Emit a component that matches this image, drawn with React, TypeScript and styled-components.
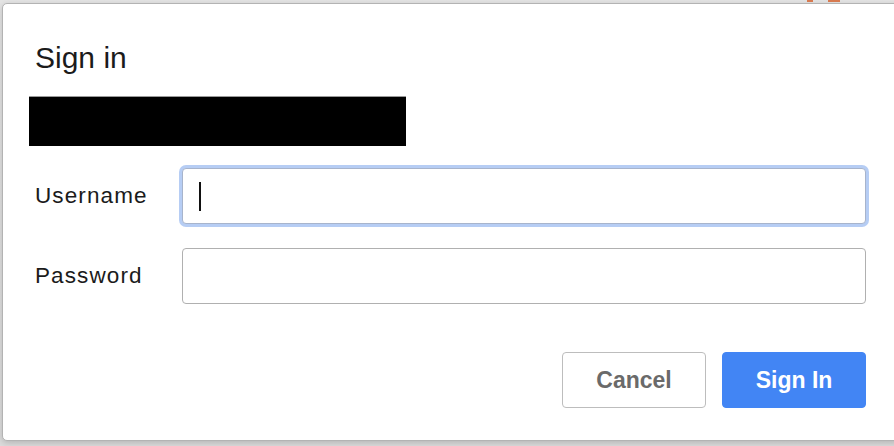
import styled, { createGlobalStyle } from 'styled-components'

const GlobalStyle = createGlobalStyle`
  html, body {
    margin: 0;
    padding: 0;
    overflow: hidden;
    height: 446px;
  }

  body {
    background: linear-gradient(#e4e4e4, #dcdcdc);
    font-family: 'Liberation Sans', Arial, sans-serif;
    color: #1f1f1f;
  }
`

const Page = styled.div`
  position: relative;
  width: 894px;
  height: 446px;
  padding: 3px 0 0 2px;
  box-sizing: border-box;
`

const TabHint = styled.div<{ left: number; width: number }>`
  position: absolute;
  top: 0;
  left: ${(p) => p.left}px;
  width: ${(p) => p.width}px;
  height: 2px;
  background: #d77a50;
`

const Dialog = styled.div`
  width: 900px;
  height: 438px;
  box-sizing: border-box;
  background: #fff;
  border: 1px solid #b3b3b3;
  border-radius: 5px;
  box-shadow: 0 2px 6px rgba(0, 0, 0, 0.18);
  padding: 37px 0 0 32px;
  display: flex;
  flex-direction: column;
`

const Title = styled.h1`
  margin: 0;
  font-size: 30px;
  font-weight: normal;
  line-height: 34px;
  color: #1b1b1b;
`

const Redacted = styled.div`
  margin: 21px 0 0 -6px;
  width: 377px;
  height: 50px;
  background: #000;
  border-top: 1px solid #9a9a9a;
  box-sizing: border-box;
`

const Form = styled.div`
  margin-top: 22px;
  display: grid;
  grid-template-columns: 147px 684px;
  row-gap: 24px;
  align-items: center;
`

const Label = styled.label`
  font-size: 22.5px;
  letter-spacing: 1.1px;
  color: #1b1b1b;
`

const Field = styled.div<{ focused?: boolean }>`
  position: relative;
  height: 56px;
  box-sizing: border-box;
  border: 1px solid #b0b0b0;
  border-radius: 4px;
  background: #fff;
  ${(p) =>
    p.focused &&
    `
    box-shadow: 0 0 0 3px #b6cdf4;
    border-color: #a7b4cc;
  `}
`

const Caret = styled.span`
  position: absolute;
  left: 16px;
  top: 13px;
  width: 2px;
  height: 29px;
  background: #111;
`

const Actions = styled.div`
  margin-top: 48px;
  width: 831px;
  display: flex;
  justify-content: flex-end;
  gap: 16px;
`

const Button = styled.button<{ primary?: boolean }>`
  width: 144px;
  height: 56px;
  box-sizing: border-box;
  border-radius: 4px;
  font-family: 'Liberation Sans', Arial, sans-serif;
  font-size: 23px;
  font-weight: bold;
  border: 1px solid ${(p) => (p.primary ? '#4285f4' : '#bdbdbd')};
  background: ${(p) => (p.primary ? '#4285f4' : '#fff')};
  color: ${(p) => (p.primary ? '#fff' : '#6a6a6a')};
  cursor: pointer;
`

export default function App() {
  return (
    <>
      <GlobalStyle />
      <Page>
        <TabHint left={807} width={6} />
        <TabHint left={828} width={12} />
        <Dialog>
          <Title>Sign in</Title>
          <Redacted />
          <Form>
            <Label>Username</Label>
            <Field focused>
              <Caret />
            </Field>
            <Label>Password</Label>
            <Field />
          </Form>
          <Actions>
            <Button>Cancel</Button>
            <Button primary>Sign In</Button>
          </Actions>
        </Dialog>
      </Page>
    </>
  )
}
